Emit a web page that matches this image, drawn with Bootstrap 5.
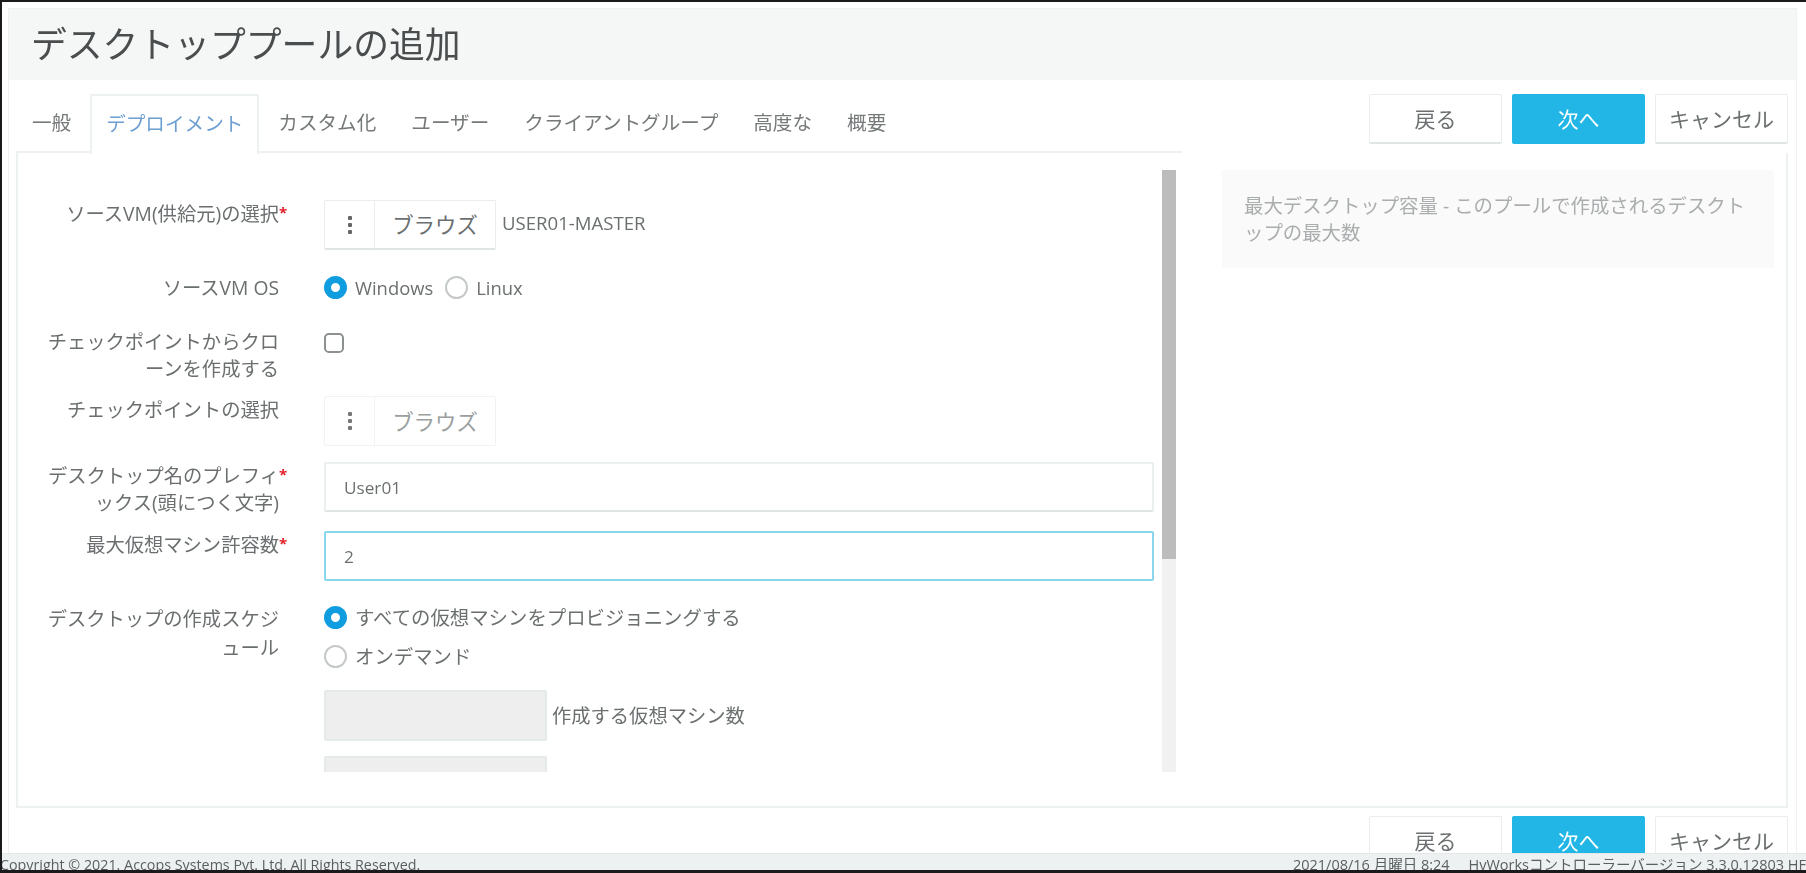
<!DOCTYPE html>
<html lang="ja">
<head>
<meta charset="utf-8">
<title>デスクトッププールの追加</title>
<link href="https://cdn.jsdelivr.net/npm/bootstrap@5.3.0/dist/css/bootstrap.min.css" rel="stylesheet">
<style>
html,body{height:100%;margin:0;overflow:hidden;background:#fff}
body{font-family:"Open Sans","Noto Sans CJK JP",sans-serif;font-size:19.3px;line-height:27px;color:#6b6f70}
.shot{position:relative;width:1806px;height:873px;border-top:2px solid #1a1a1a;border-left:2px solid #1a1a1a;border-bottom:3px solid #1a1a1a;overflow:hidden;filter:blur(.6px)}
.frame{margin:6px 9px 0 6px;height:860px;border:1px solid #eef1f1;border-bottom:0;overflow:hidden}
.head-bar{height:71px;background:#f5f7f7;padding:0 0 0 22px;font-size:35.8px;line-height:71px;color:#4a4d4e;white-space:nowrap}
.top-row{padding:14px 8px 0 7px;height:73px}
.tabs-wrap{width:1166px;height:59px;gap:3px;border-bottom:2px solid #eef1f1;padding-left:0;flex-wrap:nowrap}
.tabs-wrap .nav-link{height:59px;padding:0 16px;line-height:57px;font-size:19.6px;color:#75797a;border:0;border-radius:0;background:none;white-space:nowrap}
.tabs-wrap .nav-link.active{color:#6d9fd1;background:#fff;border:2px solid #eef1f1;border-bottom:0;height:60px;padding:0 14px;margin-bottom:-2px;line-height:55px}
.act-btn{width:133px;height:50px;padding:0;font-size:21px;line-height:48px;color:#6b6f70;background:#fff;border:1px solid #e9eded;border-bottom:2px solid #dfe4e4;border-radius:2px}
.act-btn.go{background:#22b6e6;border-color:#22b6e6;color:#fff}
.acts{gap:10px}
.pane{margin:0 8px 0 7px;height:655px;border:2px solid #eef1f1;border-top:0;padding-top:17px}
.scroller{width:1144px;height:602px;overflow:hidden;flex:none}
.scroll-rail{width:14px;height:602px;flex:none;background:#f1f1f1}
.scroll-knob{height:389px;background:#bcbcbc}
.fields{height:935px;padding-top:30px}
.lbl-cell{width:261px;flex:none;text-align:right;white-space:nowrap}
.lbl-cell.tall{line-height:29px}
.req-slot{width:45px;flex:none;color:#e01b24;font-size:15px;font-weight:700;line-height:24px}
.val-cell{width:830px;flex:none}
.browse-btn{height:50px;padding:0;font-size:21.4px;color:#6b6f70;background:#fff;border:1px solid #e9eded;border-bottom:2px solid #dfe4e4;border-radius:2px;line-height:47px}
.browse-btn.dots{width:51px;flex:none}
.browse-btn.word{width:122px;flex:none}
.browse-btn svg{display:block;margin:auto}
.browse-btn:disabled{opacity:1;background:#fff;border:1px solid #f1f3f3;color:#9b9fa0}
.file-name{margin:0 0 5px 6px;font-size:18.6px}
.tx-input{height:50px;font-size:17.2px;padding:0 18px;color:#6b6f70;border:2px solid #eceff0;border-bottom-color:#dfe4e4;border-radius:2px;box-shadow:none}
.tx-input.focused{border-color:#8ad6ef}
.tx-input.off{width:223px;height:51px;flex:none;background:#eeeeee;border-color:#e4e9e9;opacity:1}
.opt-line{gap:8px;height:27px;font-size:18.4px}
.opt-line.ja{font-size:19.4px}
.opt-line .form-check-input{margin:0;width:23px;height:23px;flex:none;border:2px solid #c6c9ca;box-shadow:none}
.opt-line .form-check-input:checked{background-color:#fff;background-image:none;border:7px solid #0f9ddf}
.chk-box{width:20px;height:20px;margin:5px 0 0 0;border:2px solid #8c9091;border-radius:4px;box-shadow:none}
.s24{margin-top:24px}.s27{margin-top:27px}.s14{margin-top:14px}.s16{margin-top:16px}.s15{margin-top:15px}.s23{margin-top:23px}.s20{margin-top:20px}.s12{margin-top:12px}
.aside-label{margin-left:1px}
.aside-label.low{margin-top:5px}
.side-pane{flex:1;padding:0 12px 0 46px}
.help-box{height:98px;background:#fafafa;padding:22px 22px 0;color:#aaadae;font-size:19.4px;line-height:27px;white-space:nowrap}
.bottom-row{padding:8px 8px 0 0;gap:10px}
.foot-bar{position:absolute;left:0;right:0;bottom:0;height:17px;background:#eef1f1;border-top:1px solid #e4e8e8;font-size:14.3px;line-height:21px;color:#5b5f60;white-space:nowrap;overflow:hidden}
.foot-copy{margin-left:-2px}
.foot-meta{flex:none;font-size:14.5px}
</style>
</head>
<body>
<div class="shot">
  <div class="frame">
    <div class="head-bar">デスクトッププールの追加</div>
    <div class="top-row d-flex justify-content-between">
      <ul class="nav tabs-wrap">
        <li class="nav-item"><a class="nav-link" href="#">一般</a></li>
        <li class="nav-item"><a class="nav-link active" href="#">デプロイメント</a></li>
        <li class="nav-item"><a class="nav-link" href="#">カスタム化</a></li>
        <li class="nav-item"><a class="nav-link" href="#">ユーザー</a></li>
        <li class="nav-item"><a class="nav-link" href="#">クライアントグループ</a></li>
        <li class="nav-item"><a class="nav-link" href="#">高度な</a></li>
        <li class="nav-item"><a class="nav-link" href="#">概要</a></li>
      </ul>
      <div class="d-flex acts">
        <button class="btn act-btn" type="button">戻る</button>
        <button class="btn act-btn go" type="button">次へ</button>
        <button class="btn act-btn" type="button">キャンセル</button>
      </div>
    </div>
    <div class="pane d-flex">
      <div class="scroller">
        <form class="fields">
          <div class="d-flex">
            <div class="lbl-cell">ソースVM(供給元)の選択</div><div class="req-slot">*</div>
            <div class="val-cell d-flex align-items-center">
              <div class="btn-group">
                <button class="btn browse-btn dots" type="button"><svg width="4" height="18" viewBox="0 0 4 18"><rect width="4" height="4" rx="1" fill="#666"/><rect y="7" width="4" height="4" rx="1" fill="#666"/><rect y="14" width="4" height="4" rx="1" fill="#666"/></svg></button>
                <button class="btn browse-btn word" type="button">ブラウズ</button>
              </div>
              <span class="file-name">USER01-MASTER</span>
            </div>
          </div>
          <div class="d-flex s24">
            <div class="lbl-cell">ソースVM OS</div><div class="req-slot"></div>
            <div class="val-cell d-flex align-items-center opt-line">
              <input class="form-check-input" type="radio" name="os" checked aria-label="Windows"><span>Windows</span>
              <input class="form-check-input ms-1" type="radio" name="os" aria-label="Linux"><span>Linux</span>
            </div>
          </div>
          <div class="d-flex s27">
            <div class="lbl-cell">チェックポイントからクロ<br>ーンを作成する</div><div class="req-slot"></div>
            <div class="val-cell"><input class="form-check-input chk-box" type="checkbox" aria-label="チェックポイントからクローンを作成する"></div>
          </div>
          <div class="d-flex s14">
            <div class="lbl-cell">チェックポイントの選択</div><div class="req-slot"></div>
            <div class="val-cell">
              <div class="btn-group">
                <button class="btn browse-btn dots" type="button" disabled><svg width="4" height="18" viewBox="0 0 4 18"><rect width="4" height="4" rx="1" fill="#777"/><rect y="7" width="4" height="4" rx="1" fill="#777"/><rect y="14" width="4" height="4" rx="1" fill="#777"/></svg></button>
                <button class="btn browse-btn word" type="button" disabled>ブラウズ</button>
              </div>
            </div>
          </div>
          <div class="d-flex s16">
            <div class="lbl-cell">デスクトップ名のプレフィ<br>ックス(頭につく文字)</div><div class="req-slot">*</div>
            <div class="val-cell"><input class="form-control tx-input" type="text" value="User01" aria-label="デスクトップ名のプレフィックス"></div>
          </div>
          <div class="d-flex s15">
            <div class="lbl-cell">最大仮想マシン許容数</div><div class="req-slot">*</div>
            <div class="val-cell"><input class="form-control tx-input focused" type="text" value="2" aria-label="最大仮想マシン許容数"></div>
          </div>
          <div class="d-flex s23">
            <div class="lbl-cell tall">デスクトップの作成スケジ<br>ュール</div><div class="req-slot"></div>
            <div class="val-cell">
              <div class="d-flex align-items-center opt-line ja"><input class="form-check-input" type="radio" name="sch" checked aria-label="すべて"><span>すべての仮想マシンをプロビジョニングする</span></div>
              <div class="d-flex align-items-center opt-line ja s12"><input class="form-check-input" type="radio" name="sch" aria-label="オンデマンド"><span>オンデマンド</span></div>
              <div class="d-flex align-items-center gap-1 s20"><input class="form-control tx-input off" type="text" disabled aria-label="作成する仮想マシン数"><span class="aside-label">作成する仮想マシン数</span></div>
              <div class="d-flex align-items-center gap-1 s15"><input class="form-control tx-input off" type="text" disabled aria-label="予備の仮想マシン数"><span class="aside-label low">予備の仮想マシン数</span></div>
            </div>
          </div>
        </form>
      </div>
      <div class="scroll-rail"><div class="scroll-knob"></div></div>
      <div class="side-pane">
        <div class="help-box">最大デスクトップ容量 - このプールで作成されるデスクト<br>ップの最大数</div>
      </div>
    </div>
    <div class="d-flex justify-content-end bottom-row">
      <button class="btn act-btn" type="button">戻る</button>
      <button class="btn act-btn go" type="button">次へ</button>
      <button class="btn act-btn" type="button">キャンセル</button>
    </div>
  </div>
  <div class="foot-bar d-flex justify-content-between">
    <span class="foot-copy">Copyright © 2021. Accops Systems Pvt. Ltd. All Rights Reserved.</span>
    <span class="foot-meta">2021/08/16 月曜日 8:24 &nbsp;&nbsp;&nbsp; HyWorksコントローラーバージョン 3.3.0.12803 HF</span>
  </div>
</div>
<script src="https://cdn.jsdelivr.net/npm/bootstrap@5.3.0/dist/js/bootstrap.bundle.min.js"></script>
</body>
</html>
